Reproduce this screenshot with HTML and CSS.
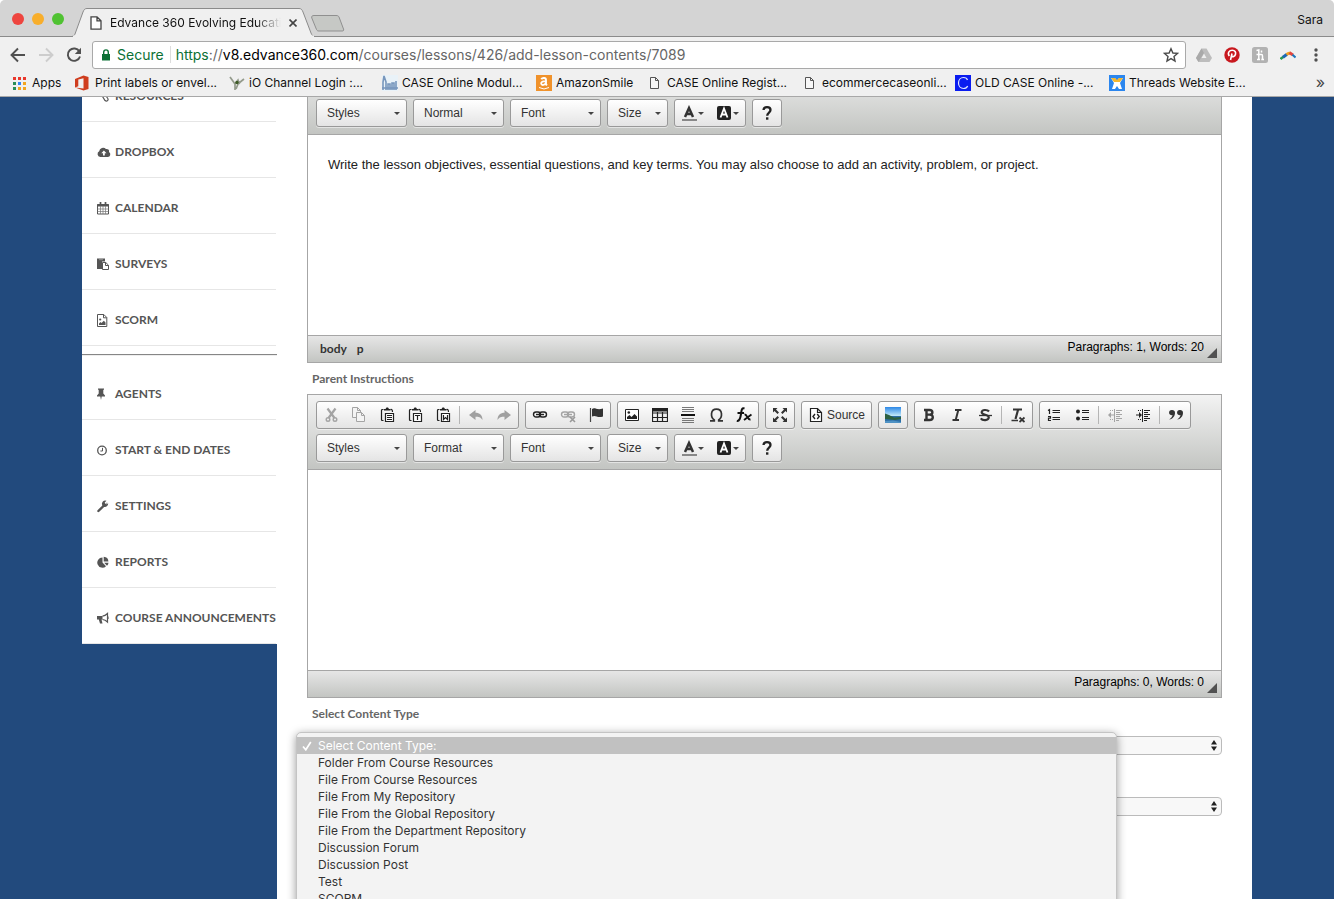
FILE: index.html
```html
<!DOCTYPE html>
<html lang="en">
<head>
<meta charset="utf-8">
<title>Edvance 360 Evolving Education</title>
<link rel="stylesheet" href="styles.css">
</head>
<body>
<header class="browser">
  <div class="tabstrip">
    <div class="lights">
      <button class="light red" aria-label="Close window"></button>
      <button class="light yellow" aria-label="Minimize window"></button>
      <button class="light green" aria-label="Zoom window"></button>
    </div>
    <div class="tab">
      <svg class="tab-shape" viewBox="0 0 244 29" aria-hidden="true"><path d="M0 28.500C2 28 2.500 27 3 26L11 4C12 1.500 13 .5 15 .5H227C229 .5 230 1.500 231 4L239 25C240 27.500 241 28.500 243 28.500" fill="#f0f0f0" stroke="#8b8b8b"/><path d="M1 28.500H242" stroke="#f0f0f0" stroke-width="2"/></svg>
      <svg class="tab-page" viewBox="0 0 12 14" aria-hidden="true"><path d="M1 .8H7L11 4.800V13.200H1ZM7 .8V4.800H11" fill="#fff" stroke="#444" stroke-width="1.300"/></svg>
      <span class="tab-title">Edvance 360 Evolving Education</span>
      <button class="tab-close" aria-label="Close tab"><svg viewBox="0 0 8 8"><path d="M.5.5 7.500 7.500M7.500.5.5 7.500" stroke="#444" stroke-width="1.600"/></svg></button>
    </div>
    <button class="newtab" aria-label="New tab"><svg viewBox="0 0 34 17"><path d="M3 .5H25C27 .5 27.500 1 28 2L32.500 14C33 15.500 32.500 16 31 16H8C6.500 16 6 15.500 5.500 14.500L.8 3C.3 1.500 1 .5 3 .5Z" fill="#c6c8c5" stroke="#8f8f8f"/></svg></button>
    <span class="profile">Sara</span>
  </div>
  <div class="navbar">
    <div class="nav-buttons">
      <button aria-label="Back"><svg viewBox="0 0 16 16"><path d="M15 8H2M8 1.500 1.500 8 8 14.500" fill="none" stroke="#505050" stroke-width="1.900"/></svg></button>
      <button aria-label="Forward"><svg viewBox="0 0 16 16"><path d="M1 8H14M8 1.500 14.500 8 8 14.500" fill="none" stroke="#cdcdcd" stroke-width="1.900"/></svg></button>
      <button aria-label="Reload"><svg viewBox="0 0 16 16"><path d="M13.400 4.500A6.200 6.200 0 1 0 14 9.500" fill="none" stroke="#505050" stroke-width="1.900"/><path d="M15 .8V7H8.800Z" fill="#505050"/></svg></button>
    </div>
    <div class="omnibox">
      <svg class="lock" viewBox="0 0 10 12" aria-hidden="true"><path d="M1 5H9V11.500H1Z" fill="#0b7135"/><path d="M2.700 5V3.200A2.300 2.300 0 0 1 7.300 3.200V5" fill="none" stroke="#0b7135" stroke-width="1.400"/></svg>
      <span class="secure">Secure</span>
      <span class="url"><span class="https">https</span>://<span class="host">v8.edvance360.com</span>/courses/lessons/426/add-lesson-contents/7089</span>
      <button class="star" aria-label="Bookmark this page"><svg viewBox="0 0 16 16"><path d="M8 1.700 9.900 6 14.500 6.400 11 9.500 12 14 8 11.600 4 14 5 9.500 1.500 6.400 6.100 6Z" fill="none" stroke="#4a4a4a" stroke-width="1.400"/></svg></button>
    </div>
    <div class="extensions">
      <button aria-label="Drive"><svg viewBox="0 0 16 16"><path d="M5.500 1.500H10.500L16 11 13.500 15H2.500L0 11Z" fill="#bdbdbd"/><path d="M5.500 1.500 8 6 2.500 15 0 11Z" fill="#a9a9a9"/><path d="M8 6.500 10.500 11H5.500Z" fill="#eee"/></svg></button>
      <button aria-label="Pinterest"><svg viewBox="0 0 16 16"><circle cx="8" cy="8" r="7.700" fill="#c8181e"/><path d="M6.500 13 8 6.500M5.300 9C3 5.500 5.500 3.300 8.300 3.300 11 3.300 12 5.200 11.500 7.300 11 9.600 8.500 10.300 7.500 8.800" fill="none" stroke="#fff" stroke-width="1.600"/></svg></button>
      <button aria-label="Honey"><svg viewBox="0 0 16 16"><rect width="16" height="16" rx="2.500" fill="#b2b2b2"/><path d="M4.500 3.500 6.800 3V12.500M4.500 7.500H9.500Q10.500 7.500 10.500 9V12.500M5 12.500H8M9.300 12.500H12M9.500 3.500V5.500" fill="none" stroke="#fff" stroke-width="1.500"/></svg></button>
      <button aria-label="Arc"><svg viewBox="0 0 16 16"><path d="M.5 12 3.500 9.700" stroke="#2a9a55" stroke-width="2.400"/><path d="M3 10.200 7 7.200" stroke="#1e67b5" stroke-width="3"/><path d="M6.500 7.400Q8.500 6 10.500 6" stroke="#f0a020" stroke-width="3" fill="none"/><path d="M9.500 5.700 13 8" stroke="#e2463f" stroke-width="3"/><path d="M12.500 7.700 15.500 10.500" stroke="#1a75bc" stroke-width="2"/></svg></button>
      <button aria-label="Menu"><svg viewBox="0 0 16 16"><g fill="#505050"><circle cx="8" cy="3" r="1.700"/><circle cx="8" cy="8" r="1.700"/><circle cx="8" cy="13" r="1.700"/></g></svg></button>
    </div>
  </div>
  <nav class="bookmarks" aria-label="Bookmarks">
    <a href="#"><svg viewBox="0 0 16 16"><g fill="#e9382c"><path d="M1 2h3v3H1zM6 2h3v3H6zM11 2h3v3h-3z"/></g><path d="M1 7h3v3H1z" fill="#2a8d57"/><path d="M6 7h3v3H6z" fill="#3284f5"/><path d="M11 7h3v3h-3zM6 12h3v3H6zM11 12h3v3h-3z" fill="#f2a51f"/><path d="M1 12h3v3H1z" fill="#2a8d57"/></svg><span>Apps</span></a>
    <a href="#"><svg viewBox="0 0 16 16"><path d="M0 4 8.500 .5 13.500 2V14L8.500 15.500 0 12.500 8.500 13.500V3.200L3.300 4.500V11.300L0 12.500Z" fill="#cf3d1e"/></svg><span>Print labels or envel...</span></a>
    <a href="#"><svg viewBox="0 0 16 16"><path d="M1 2 6 9V15M6 9 9 5 10 8 15 4M7 14 9 9 11 8" fill="none" stroke="#949b8c" stroke-width="1.700"/><circle cx="8" cy="7.500" r="1.700" fill="#3d5b26"/></svg><span>iO Channel Login :...</span></a>
    <a href="#"><svg viewBox="0 0 16 16"><rect width="16" height="16" fill="#e9f2f8"/><path d="M1 15V7L2 1 4 7V15M6 15V9H8V15M10 15V8H12V15M14 15V6M0 13H16" fill="none" stroke="#7796bc" stroke-width="1.600"/></svg><span>CASE Online Modul...</span></a>
    <a href="#"><svg viewBox="0 0 16 16"><rect width="16" height="16" fill="#f0922b"/><path d="M5.200 4.200C6.500 2.500 10 2.500 10 5V9.300L11 10.300M10 6.200C6.500 6 5 7 5.200 8.600 5.600 10.700 9 10.300 10 7.800" fill="none" stroke="#fff" stroke-width="1.900"/><path d="M3 12.500Q8 15.500 13 12.500" fill="none" stroke="#fff"/></svg><span>AmazonSmile</span></a>
    <a href="#"><svg viewBox="0 0 16 16"><path d="M3.500 2.500H8.500L11.500 5.500V13.500H3.500ZM8.500 2.500V5.500H11.500" fill="#f7f7f7" stroke="#555"/></svg><span>CASE Online Regist...</span></a>
    <a href="#"><svg viewBox="0 0 16 16"><path d="M3.500 2.500H8.500L11.500 5.500V13.500H3.500ZM8.500 2.500V5.500H11.500" fill="#f7f7f7" stroke="#555"/></svg><span>ecommercecaseonli...</span></a>
    <a href="#"><svg viewBox="0 0 16 16"><rect width="16" height="16" fill="#0a1cf0"/><path d="M12.500 5C12 3 10 2.500 8.500 2.500 5.500 2.500 3.500 4.800 3.500 8S5.500 13.500 8.500 13.500C10.500 13.500 12 12.500 12.700 11" fill="none" stroke="#dfe4ff" stroke-width="1.200"/></svg><span>OLD CASE Online -...</span></a>
    <a href="#"><svg viewBox="0 0 16 16"><rect width="16" height="16" fill="#2b86ee"/><path d="M2 3H6L8 6 10 3H14L11 8 13 14H10L8 11 6 14H3L5 8Z" fill="#fff"/><path d="M2 3H6L8 5 10 3H14L11 7H5Z" fill="#f5b82e"/></svg><span>Threads Website E...</span></a>
    <button class="overflow" aria-label="More bookmarks">»</button>
  </nav>
</header>

<div class="page">
  <div class="container">
    <nav class="sidebar" aria-label="Course">
      <ul>
        <li><a href="#"><svg viewBox="0 0 14 14"><path d="M4 5 8 11.500C10 13 12 11 10.500 9L7 4M2 4 8 3" fill="none" stroke="#555" stroke-width="1.200"/></svg>RESOURCES</a></li>
        <li><a href="#"><svg viewBox="0 0 14 14"><path d="M3.200 12A3.100 3.100 0 0 1 2.200 6.200 3.900 3.900 0 0 1 9 4 2.400 2.400 0 0 1 12 7 2.700 2.700 0 0 1 10.800 12Z" fill="#555"/><path d="M6.900 5.500 9.500 8.200H7.800V10.500H6V8.200H4.300Z" fill="#fff"/></svg>DROPBOX</a></li>
        <li><a href="#"><svg viewBox="0 0 14 14"><path d="M.5 3.500H11.500V13H.5Z" fill="none" stroke="#555"/><path d="M.5 3H11.500V5.500H.5Z" fill="#555"/><path d="M3.500 1V4M8.500 1V4" stroke="#555" stroke-width="1.700"/><path d="M3.500 5V13M6 5V13M8.500 5V13M.5 8H11.500M.5 10.500H11.500" stroke="#777" stroke-width=".7"/></svg>CALENDAR</a></li>
        <li><a href="#"><svg viewBox="0 0 14 14"><path d="M0 1.500H8V4.500H5V12H0Z" fill="#555"/><path d="M2 2.700H6" stroke="#aaa" stroke-width=".7"/><path d="M5.500 5.500H8.800L11.500 8.200V12.500H5.500ZM8.500 5.500V8.500H11.500" fill="#fff" stroke="#555"/></svg>SURVEYS</a></li>
        <li><a href="#"><svg viewBox="0 0 14 14"><path d="M.5 1.500H6.800L9.800 4.500V13.500H.5ZM6.500 1.500V4.800H9.800" fill="none" stroke="#555"/><circle cx="3.200" cy="6.500" r="1.100" fill="#555"/><path d="M2 12V10.500L3.500 9 4.500 10 6.800 7.800 8.500 9.500V12Z" fill="#555"/></svg>SCORM</a></li>
      </ul>
      <hr>
      <ul>
        <li><a href="#"><svg viewBox="0 0 14 14"><path d="M1 1.500H7V2.800H6.300V6.500L8 8.500V9.500H4.700L4 13 3.300 9.500H0V8.500L1.700 6.500V2.800H1Z" fill="#555"/></svg>AGENTS</a></li>
        <li><a href="#"><svg viewBox="0 0 14 14"><circle cx="5" cy="7.500" r="4.300" fill="none" stroke="#555" stroke-width="1.300"/><path d="M5.500 4.800V8H3.400" fill="none" stroke="#555"/></svg>START &amp; END DATES</a></li>
        <li><a href="#"><svg viewBox="0 0 14 14"><path d="M1.400 12 6.500 7" stroke="#555" stroke-width="2.400" stroke-linecap="round"/><path d="M10.500 3 8.500 5 7.700 3.500 9.500 1.800A3.300 3.300 0 0 0 5.200 6.200C6.500 9 11 8.500 11.200 4.200L9 5.500Z" fill="#555"/></svg>SETTINGS</a></li>
        <li><a href="#"><svg viewBox="0 0 14 14"><path d="M5.500 2.500V7.500L9 11.200A5.100 5.100 0 1 1 5.500 2.500Z" fill="#555"/><path d="M6.700 1.700A5 5 0 0 1 11.400 6.500H6.700ZM7.200 7.800H11.500A5 5 0 0 1 10 10.800Z" fill="#555"/></svg>REPORTS</a></li>
        <li><a href="#"><svg viewBox="0 0 14 14"><path d="M0 5H5.500V8.500H4.500L5.500 12.500H3L1.800 8.500H0Z" fill="#555"/><path d="M5.500 5.200C7.500 5 9.500 3.500 10.500 2.500V11C9.500 10 7.500 8.700 5.500 8.500M11 5.500V8" fill="none" stroke="#555" stroke-width="1.200"/></svg>COURSE ANNOUNCEMENTS</a></li>
      </ul>
    </nav>

    <main class="content">
      <section class="editor" aria-label="Lesson instructions">
        <div class="toolbar lower">
          <div class="tool-row">
            <label class="combo"><select aria-label="Styles"><option>Styles</option></select></label>
            <label class="combo"><select aria-label="Paragraph format"><option>Normal</option></select></label>
            <label class="combo"><select aria-label="Font name"><option>Font</option></select></label>
            <label class="combo small"><select aria-label="Font size"><option>Size</option></select></label>
            <div class="group">
              <button class="color" aria-label="Text color"><svg viewBox="0 0 16 16"><use href="#i-fg"/></svg></button>
              <button class="color" aria-label="Background color"><svg viewBox="0 0 16 16"><use href="#i-bg"/></svg></button>
            </div>
            <div class="group"><button aria-label="About"><svg viewBox="0 0 16 16"><use href="#i-help"/></svg></button></div>
          </div>
        </div>
        <div class="editable" contenteditable="true" role="textbox" aria-label="Lesson text"><p>Write the lesson objectives, essential questions, and key terms. You may also choose to add an activity, problem, or project.</p></div>
        <div class="statusbar">
          <a href="#">body</a><a href="#">p</a>
          <span class="count">Paragraphs: 1, Words: 20</span>
          <svg class="grip" viewBox="0 0 10 10" aria-hidden="true"><path d="M10 0V10H0Z" fill="#515151"/></svg>
        </div>
      </section>

      <h2 class="field-label">Parent Instructions</h2>
      <section class="editor" aria-label="Parent Instructions">
        <div class="toolbar">
          <div class="tool-row">
            <div class="group">
              <button aria-label="Cut" disabled><svg viewBox="0 0 16 16"><g fill="none" stroke="#a4a4a4"><path d="M4.500 1.500 11.500 11M12.500 1.500 5.500 11" stroke-width="2.200"/><circle cx="5" cy="12.500" r="1.800" stroke-width="1.400"/><circle cx="12" cy="12.500" r="1.800" stroke-width="1.400"/></g></svg></button>
              <button aria-label="Copy" disabled><svg viewBox="0 0 16 16"><g fill="#f4f4f4" stroke="#a4a4a4"><path d="M1.500 .5H6.500L9.500 3.500V10.500H1.500ZM6.500 .5V3.500H9.500"/><path d="M5.500 5.500H10.500L13.500 8.500V14.500H5.500ZM10.500 5.500V8.500H13.500"/></g></svg></button>
              <button aria-label="Paste"><svg viewBox="0 0 16 16"><use href="#i-clip"/><path d="M8 8.500H13M8 10.500H13M8 12.500H13" stroke="#222"/></svg></button>
              <button aria-label="Paste as plain text"><svg viewBox="0 0 16 16"><use href="#i-clip"/><path d="M8 8.500H13M10.500 8.500V13" stroke="#222" stroke-width="1.200"/></svg></button>
              <button aria-label="Paste from Word"><svg viewBox="0 0 16 16"><use href="#i-clip"/><path d="M8.500 8V12.500L10.500 10.500 12.500 12.500V8" fill="none" stroke="#222" stroke-width="1.200"/></svg></button>
              <span class="sep"></span>
              <button aria-label="Undo" disabled><svg viewBox="0 0 16 16"><path d="M1 8 7.500 3V5.800C11.500 5.800 14.500 8 14.500 13 12.500 10 10.500 9.800 7.500 9.800V13Z" fill="#a0a0a0"/></svg></button>
              <button aria-label="Redo" disabled><svg viewBox="0 0 16 16"><path d="M15 8 8.500 3V5.800C4.500 5.800 1.500 8 1.500 13 3.500 10 5.500 9.800 8.500 9.800V13Z" fill="#a0a0a0"/></svg></button>
            </div>
            <div class="group">
              <button aria-label="Link"><svg viewBox="0 0 16 16"><use href="#i-link" color="#222"/></svg></button>
              <button aria-label="Unlink" disabled><svg viewBox="0 0 16 16"><use href="#i-link" color="#a4a4a4"/><path d="M10 10 15 15M15 10 10 15" stroke="#999" stroke-width="1.600"/></svg></button>
              <button aria-label="Anchor"><svg viewBox="0 0 16 16"><path d="M2.500 1V15" stroke="#444" stroke-width="1.200"/><path d="M4 2C7 0 8.500 3.500 15 1.500V9.500C9 11.500 8 7.500 4 9.500Z" fill="#333"/></svg></button>
            </div>
            <div class="group">
              <button aria-label="Image"><svg viewBox="0 0 16 16"><path d="M1.500 2.500H14.500V13.500H1.500Z" fill="#fff" stroke="#222"/><path d="M3 12V10L5.500 8 7.500 10 10.500 7 13 9.500V12Z" fill="#222"/><circle cx="4.800" cy="5.500" r="1.300" fill="#222"/></svg></button>
              <button aria-label="Table"><svg viewBox="0 0 16 16"><path d="M.5 1.500H15.500V14.500H.5ZM.5 6H15.500M.5 10.500H15.500M5.500 5V14M10.500 5V14" fill="none" stroke="#222" stroke-width="1.200"/><path d="M.5 1.500H15.500V4.500H.5Z" fill="#222"/></svg></button>
              <button aria-label="Horizontal line"><svg viewBox="0 0 16 16"><path d="M2 .5H14M2 2.500H14M2 4.500H14M2 11.500H14M2 13.500H14M2 15.500H14" stroke="#777"/><path d="M1 8H15" stroke="#111" stroke-width="2"/></svg></button>
              <button aria-label="Special character"><svg viewBox="0 0 16 16"><path d="M2 13.800H6.300V13C2.500 10.500 2 2.200 8.500 2.200S14.500 10.500 10.700 13V13.800H15" fill="none" stroke="#333" stroke-width="1.700"/></svg></button>
              <button aria-label="Math formula"><svg viewBox="0 0 16 16"><path d="M8.500 1.500C5.500 .5 5.500 3.500 5 7S3.500 14.500 .8 14M1.500 6H8" fill="none" stroke="#111" stroke-width="2"/><path d="M8.500 7.500C11.500 7 11 13 14.500 12.500M15.500 7.500 8 13" fill="none" stroke="#111" stroke-width="1.900"/></svg></button>
            </div>
            <div class="group"><button aria-label="Maximize"><svg viewBox="0 0 16 16"><path d="M1 1H5.500L4 2.500 7 5.500 5.500 7 2.500 4 1 5.500ZM15 1V5.500L13.500 4 10.500 7 9 5.500 12 2.500 10.500 1ZM1 15V10.500L2.500 12 5.500 9 7 10.500 4 13.500 5.500 15ZM15 15H10.500L12 13.500 9 10.500 10.500 9 13.500 12 15 10.500Z" fill="#333"/></svg></button></div>
            <div class="group"><button class="source"><svg viewBox="0 0 16 16"><path d="M2.500 1.500H9.500L13.500 5.500V14.500H2.500ZM9.500 1.500V5.500H13.500" fill="#fff" stroke="#222" stroke-width="1.200"/><path d="M7 7 5 9.500 7 12M9.200 7 11.200 9.500 9.200 12" fill="none" stroke="#222" stroke-width="1.400"/></svg>Source</button></div>
            <div class="group"><button aria-label="Picture gallery"><svg viewBox="0 0 16 16"><defs><linearGradient id="sky" x2="0" y2="1"><stop offset="0" stop-color="#2b87e6"/><stop offset="1" stop-color="#c6ecfa"/></linearGradient></defs><rect width="16" height="9" fill="url(#sky)"/><path d="M0 9H16V16H0Z" fill="#2c6ea6"/><path d="M0 6.500 4 8 9 10.500 16 10V12L10 13 0 12Z" fill="#2c6040"/><path d="M0 14 8 13.500 16 15V16H0Z" fill="#4f92c4"/></svg></button></div>
            <div class="group">
              <button aria-label="Bold"><svg viewBox="0 0 16 16"><path d="M4.500 3H8.500C12.500 3 12 7.600 9 7.600H5M8.500 7.600C13 7.600 12.800 13 8.500 13H4.500M5.500 3V13M3 3H5M3 13H5" fill="none" stroke="#333" stroke-width="2.400"/></svg></button>
              <button aria-label="Italic"><svg viewBox="0 0 16 16"><path d="M6 3H12.500M3.500 13H10M9.300 3 6.700 13" fill="none" stroke="#333" stroke-width="2"/></svg></button>
              <button aria-label="Strikethrough"><svg viewBox="0 0 16 16"><path d="M12 4.500C10.500 2.500 4.500 2.300 4.700 5.300 5 8.500 12 7 11.800 10.500 11.500 13.800 5.500 13.800 3.800 11.300" fill="none" stroke="#333" stroke-width="2.200"/><path d="M2 8.500H15" stroke="#333" stroke-width="1.300"/></svg></button>
              <span class="sep"></span>
              <button aria-label="Remove format"><svg viewBox="0 0 16 16"><path d="M3 2.500H12M8 3 5.500 12" fill="none" stroke="#333" stroke-width="2.200"/><path d="M1.500 13.500H8M9.500 10.500 14.500 15M14.500 10.500 9.500 15" stroke="#333" stroke-width="1.700"/></svg></button>
            </div>
            <div class="group">
              <button aria-label="Numbered list"><svg viewBox="0 0 16 16"><path d="M6.500 3.500H14M6.500 5.500H14M6.500 10.500H14M6.500 12.500H14" stroke="#222" stroke-width="1.100"/><path d="M2 3.500 3.500 2.500V7M2 9.500H4.500V11.200H2.500V13.500H5" fill="none" stroke="#222" stroke-width="1.200"/></svg></button>
              <button aria-label="Bulleted list"><svg viewBox="0 0 16 16"><path d="M8 3.500H15M8 5.500H15M8 10.500H15M8 12.500H15" stroke="#222" stroke-width="1.100"/><circle cx="4" cy="4.500" r="2" fill="#222"/><circle cx="4" cy="11.500" r="2" fill="#222"/></svg></button>
              <span class="sep"></span>
              <button aria-label="Decrease indent" disabled><svg viewBox="0 0 16 16"><use href="#i-lines" color="#a4a4a4"/><path d="M4 5 1 8 4 11V8.500H7V7.500H4Z" fill="#a4a4a4"/></svg></button>
              <button aria-label="Increase indent"><svg viewBox="0 0 16 16"><use href="#i-lines" color="#222"/><path d="M4 5 7 8 4 11V8.500H1V7.500H4Z" fill="#222"/></svg></button>
              <span class="sep"></span>
              <button aria-label="Block quote"><svg viewBox="0 0 16 16"><path d="M4.200 3A2.600 2.600 0 1 0 4.500 8C4.300 9.800 3 11.200 1.200 12.500 5 11.800 7 9 7 5.700 7 4 5.800 3 4.200 3ZM12.200 3A2.600 2.600 0 1 0 12.500 8C12.300 9.800 11 11.200 9.200 12.500 13 11.800 15 9 15 5.700 15 4 13.800 3 12.200 3Z" fill="#333"/></svg></button>
            </div>
          </div>
          <div class="tool-row">
            <label class="combo"><select aria-label="Styles"><option>Styles</option></select></label>
            <label class="combo"><select aria-label="Paragraph format"><option>Format</option></select></label>
            <label class="combo"><select aria-label="Font name"><option>Font</option></select></label>
            <label class="combo small"><select aria-label="Font size"><option>Size</option></select></label>
            <div class="group">
              <button class="color" aria-label="Text color"><svg viewBox="0 0 16 16"><use href="#i-fg"/></svg></button>
              <button class="color" aria-label="Background color"><svg viewBox="0 0 16 16"><use href="#i-bg"/></svg></button>
            </div>
            <div class="group"><button aria-label="About"><svg viewBox="0 0 16 16"><use href="#i-help"/></svg></button></div>
          </div>
        </div>
        <div class="editable" contenteditable="true" role="textbox" aria-label="Parent instructions text"></div>
        <div class="statusbar">
          <span class="count">Paragraphs: 0, Words: 0</span>
          <svg class="grip" viewBox="0 0 10 10" aria-hidden="true"><path d="M10 0V10H0Z" fill="#515151"/></svg>
        </div>
      </section>

      <h2 class="field-label"><label for="content-type">Select Content Type</label></h2>
      <div class="field">
        <select id="content-type" class="native"><option></option></select>
        <svg class="updown" viewBox="0 0 6 11" aria-hidden="true"><path d="M3 0 6 4.500H0ZM3 11 0 6.500H6Z" fill="#222"/></svg>
        <ul class="menu" role="listbox" aria-label="Content types">
          <li role="option" aria-selected="true"><svg viewBox="0 0 10 10" aria-hidden="true"><path d="M1 5.500 3.800 8.800 8.800 1" fill="none" stroke="#fff" stroke-width="1.700"/></svg>Select Content Type:</li>
          <li role="option">Folder From Course Resources</li>
          <li role="option">File From Course Resources</li>
          <li role="option">File From My Repository</li>
          <li role="option">File From the Global Repository</li>
          <li role="option">File From the Department Repository</li>
          <li role="option">Discussion Forum</li>
          <li role="option">Discussion Post</li>
          <li role="option">Test</li>
          <li role="option">SCORM</li>
        </ul>
      </div>
      <div class="field">
        <select class="native" aria-label="Content item"><option></option></select>
        <svg class="updown" viewBox="0 0 6 11" aria-hidden="true"><path d="M3 0 6 4.500H0ZM3 11 0 6.500H6Z" fill="#222"/></svg>
      </div>
    </main>
  </div>
</div>

<svg class="sprite" aria-hidden="true">
  <symbol id="i-clip" viewBox="0 0 16 16"><path d="M4.500 13.500H3.500Q2.500 13.500 2.500 12.500V3.500Q2.500 2.500 3.500 2.500H4.500M11.500 2.500Q13.500 2 13.500 5" fill="none" stroke="#222" stroke-width="1.200"/><path d="M5 3.500V2H6.500L7.500 .5H9L10 2H11.500V3.500Z" fill="#222"/><path d="M6.500 6.500H14.500V14.500H6.500Z" fill="#fff" stroke="#222" stroke-width="1.200"/></symbol>
  <symbol id="i-link" viewBox="0 0 16 16"><rect x="1.500" y="5" width="7" height="5" rx="2.500" fill="none" stroke="currentColor" stroke-width="1.400"/><rect x="7.500" y="5" width="7" height="5" rx="2.500" fill="none" stroke="currentColor" stroke-width="1.400"/><path d="M4 7.500H12" stroke="currentColor" stroke-width="1.400"/></symbol>
  <symbol id="i-lines" viewBox="0 0 16 16"><path d="M7.500 2V15" stroke="currentColor"/><path d="M9 3.500H15M9 5.500H13M9 7.500H15M9 9.500H13M9 11.500H15M9 13.500H12" stroke="currentColor"/><path d="M3 3.500H7M3 12.500H7" stroke="currentColor" stroke-dasharray="1 1"/></symbol>
  <symbol id="i-fg" viewBox="0 0 16 16"><path d="M4 12 8 3 12 12M5.500 9H10.500" fill="none" stroke="#333" stroke-width="2.500"/><path d="M1 15H16" stroke="#888" stroke-width="2"/></symbol>
  <symbol id="i-bg" viewBox="0 0 16 16"><rect x="1" y="1" width="14" height="14" rx="2" fill="#222"/><path d="M4.500 12.500 8 3.500 11.500 12.500M6 9.500H10" fill="none" stroke="#fff" stroke-width="1.800"/></symbol>
  <symbol id="i-help" viewBox="0 0 16 16"><path d="M4.500 5C4.800 1 11.500 1.300 11.500 5 11.500 7.800 8.200 7.300 8.200 10.800" fill="none" stroke="#222" stroke-width="2.300"/><path d="M7 12.300H9.400V14.700H7Z" fill="#222"/></symbol>
</svg>
</body>
</html>
```

FILE: styles.css
```css
* { box-sizing: border-box; }

body {
  margin: 0;
  height: 100vh;
  display: flex;
  flex-direction: column;
  overflow: hidden;
  background: #fff;
  font-family: "Liberation Sans", Arial, sans-serif;
  font-size: 12px;
  color: #222;
}

button {
  margin: 0;
  padding: 0;
  border: 0;
  background: none;
  font: inherit;
  color: inherit;
}

svg { display: block; flex: none; }
ul { list-style: none; margin: 0; padding: 0; }
a { color: inherit; text-decoration: none; }
.sprite { display: none; }

/* Browser frame */
.browser {
  flex: none;
  background: #f0f0f0;
  border-bottom: 1px solid #a8a8a8;
  border-radius: 5px 5px 0 0;
  font-family: Inter, sans-serif;
  color: #111;
}

.tabstrip {
  height: 37px;
  display: flex;
  align-items: flex-end;
  background: #d4d4d4;
  border-bottom: 1px solid #8b8b8b;
  border-radius: 5px 5px 0 0;
}

.lights {
  display: flex;
  gap: 8px;
  padding: 0 8px 11px 12px;
}

.light { width: 12px; height: 12px; border-radius: 50%; }
.red { background: #ee453f; }
.yellow { background: #f8ae2b; }
.green { background: #50c232; }

.tab {
  position: relative;
  width: 244px;
  height: 29px;
  margin-bottom: -1px;
  display: flex;
  align-items: center;
  gap: 8px;
  padding: 0 19px 0 18px;
}

.tab-shape { position: absolute; left: 0; top: 0; width: 244px; height: 29px; }
.tab-page { position: relative; width: 12px; height: 14px; }

.tab-title {
  position: relative;
  flex: 1;
  overflow: hidden;
  white-space: nowrap;
  -webkit-mask-image: linear-gradient(to right, #000 85%, transparent);
  mask-image: linear-gradient(to right, #000 85%, transparent);
}

.tab-close { position: relative; width: 8px; }

.newtab { width: 34px; margin: 0 auto 4px -5px; }
.profile { padding: 0 11px 9px 0; }

.navbar {
  height: 35px;
  display: flex;
  align-items: center;
  padding: 0 10px;
}

.nav-buttons { display: flex; gap: 12px; width: 82px; }
.nav-buttons svg, .extensions svg, .star svg { width: 16px; height: 16px; }

.omnibox {
  flex: 1;
  height: 28px;
  display: flex;
  align-items: center;
  padding: 0 6px 0 8px;
  border: 1px solid #a9a9a9;
  border-radius: 3px;
  background: #fff;
  font-size: 14px;
}

.lock { width: 10px; height: 12px; margin-right: 6px; }
.secure { color: #0b7135; padding-right: 6px; margin-right: 5px; border-right: 1px solid #ddd; }
.url { flex: 1; color: #666; white-space: nowrap; }
.https { color: #0b7135; }
.host { color: #000; }

.extensions { display: flex; gap: 12px; padding-left: 10px; }

.bookmarks {
  height: 24px;
  display: grid;
  grid-template-columns: 63px 154px 153px 154px 111px 155px 153px 154px 1fr auto;
  align-items: center;
  padding: 0 9px 2px 12px;
  line-height: 16px;
  white-space: nowrap;
}

.bookmarks a { display: flex; align-items: center; gap: 4px; }
.bookmarks svg { width: 16px; height: 16px; }
.overflow { font-size: 16px; color: #444; padding-bottom: 2px; }

/* Page */
.page { flex: 1; min-height: 0; overflow: hidden; background: #224a7d; }

.container {
  height: 100%;
  margin: 0 82px;
  display: flex;
  align-items: flex-start;
}

.sidebar {
  width: 195px;
  margin-top: -31px;
  background: #fff;
  font: 700 12px/16px Lato, sans-serif;
  color: #555;
}

.sidebar li { height: 56px; margin-right: 1px; border-bottom: 1px solid #e6e6e6; }
.sidebar a { height: 56px; display: flex; align-items: center; gap: 4px; padding: 3px 0 0 15px; white-space: nowrap; }
.sidebar svg { width: 14px; height: 14px; }
.sidebar hr { height: 2px; margin: 8px 0; border: 0; border-top: 1px solid #868686; background: #eee; }

.content {
  flex: 1;
  min-width: 0;
  min-height: 100%;
  padding: 0 30px 40px;
  background: #fff;
}

.editor { border: 1px solid #a6a6a6; }
.editor:first-child { margin-top: -38px; }

.toolbar {
  display: flex;
  flex-direction: column;
  gap: 5px;
  padding: 6px 8px 7px;
  border-bottom: 1px solid #a6a6a6;
  background: linear-gradient(#f3f3f3, #c3c5c2);
}

.toolbar.lower { padding-top: 39px; }
.tool-row { display: flex; gap: 6px; }

.group, .combo {
  height: 28px;
  border: 1px solid #999;
  border-radius: 3px;
  background: linear-gradient(#fff, #e4e4e4);
  box-shadow: 0 1px 0 rgba(255, 255, 255, .5);
}

.group { display: flex; align-items: center; }
.group button { display: flex; align-items: center; height: 26px; padding: 0 6px; }
.group svg { width: 16px; height: 16px; }
.group .source { gap: 3px; color: #333; }
.sep { width: 1px; height: 18px; margin: 0 2px; background: #b5b5b5; }

.combo { position: relative; width: 91px; }
.combo.small { width: 61px; }

.combo select {
  width: 100%;
  height: 26px;
  padding: 0 0 0 10px;
  border: 0;
  background: none;
  appearance: none;
  font: inherit;
  color: #333;
}

.combo::after {
  content: "";
  position: absolute;
  right: 6px;
  top: 12px;
}

.combo::after, .color::after {
  content: "";
  border: 3px solid transparent;
  border-top-color: #444;
  border-bottom: 0;
}

.group .color { width: 35px; gap: 1px; }

.editable {
  min-height: 200px;
  padding: 20px;
  font-size: 13px;
  line-height: 20px;
}

.editable p { margin: 0; }

.statusbar {
  height: 27px;
  display: flex;
  align-items: center;
  gap: 10px;
  padding: 0 4px 0 12px;
  border-top: 1px solid #a6a6a6;
  background: linear-gradient(#e6e6e6, #c3c5c2);
}

.statusbar a { font: 700 12px/16px Lato, sans-serif; color: #333; }
.count { margin-left: auto; padding-bottom: 4px; color: #000; }
.grip { width: 10px; height: 10px; margin: 8px 0 0 -7px; }

.field-label {
  margin: 8px 5px 7px;
  font: 700 12px/16px Lato, sans-serif;
  color: #666;
}

.field { position: relative; margin: 14px 0 42px; }

.native {
  display: block;
  width: 100%;
  height: 19px;
  border: 1px solid #bbb;
  border-radius: 4px;
  background: #f8f8f8;
  appearance: none;
}

.updown { position: absolute; right: 5px; top: 4px; width: 6px; height: 11px; }

.menu {
  position: absolute;
  z-index: 1;
  top: -4px;
  left: -11px;
  right: 105px;
  height: 220px;
  padding-top: 4px;
  border: 1px solid #c4c4c4;
  border-radius: 5px;
  background: #f3f3f3;
  box-shadow: 0 2px 10px rgba(0, 0, 0, .4);
  font: 12px/17px Inter, sans-serif;
  color: #333;
}

.menu li { position: relative; padding-left: 21px; }
.menu li[aria-selected] { background: #c1c1c1; color: #fff; }
.menu svg { position: absolute; left: 5px; top: 4px; width: 10px; height: 10px; }
```
